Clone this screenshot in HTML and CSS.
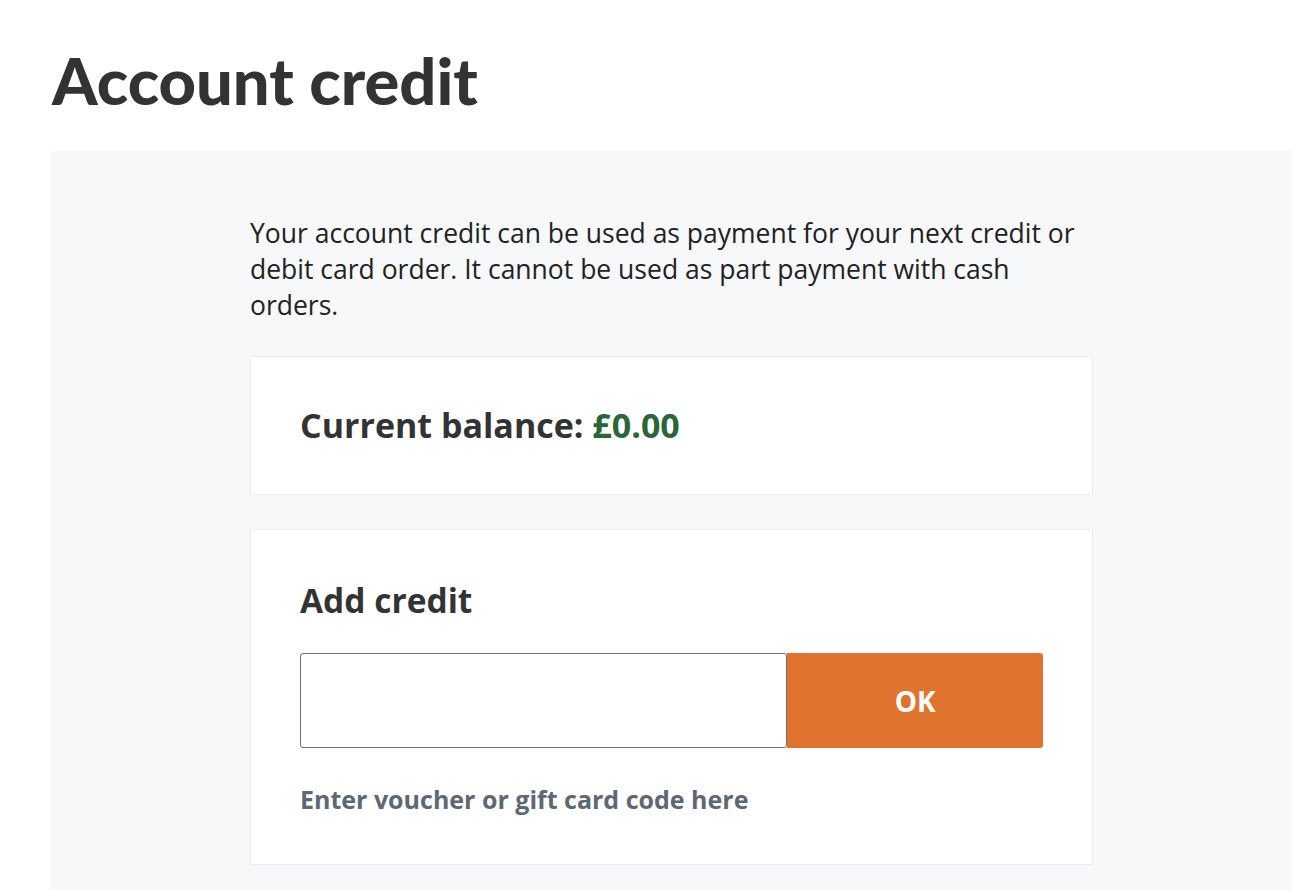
FILE: index.html
```html
<!DOCTYPE html>
<html lang="en">
<head>
<meta charset="utf-8">
<title>Account credit</title>
<link rel="stylesheet" href="styles.css">
</head>
<body>
<main class="page">
  <h1 class="title">Account credit</h1>
  <section class="panel">
    <div class="column">
      <p class="intro">Your account credit can be used as payment for your next credit or debit card order. It cannot be used as part payment with cash orders.</p>
      <div class="card balance-card">
        <h2 class="balance">Current balance: <span class="amount">£0.00</span></h2>
      </div>
      <div class="card add-card">
        <h2 class="card-title">Add credit</h2>
        <form class="code-form">
          <input class="code-input" type="text" aria-label="Voucher code">
          <button class="ok-btn" type="button">OK</button>
        </form>
        <p class="hint">Enter voucher or gift card code here</p>
      </div>
    </div>
  </section>
</main>
</body>
</html>
```

FILE: styles.css
```css
html, body {
  margin: 0;
  padding: 0;
  background: #ffffff;
}
body {
  font-family: "Open Sans", "Noto Sans", sans-serif;
  color: #333333;
}
.page {
  padding: 0 10px 0 50px;
}
.title {
  margin: 0;
  padding: 40px 0 0 2px;
  height: 151px;
  box-sizing: border-box;
  font-family: Lato, "Open Sans", sans-serif;
  font-size: 65px;
  font-weight: 900;
  line-height: 80px;
  color: #333333;
}
.panel {
  background: #f7f8fa;
  padding: 64px 0 26px 200px;
}
.column {
  width: 843px;
}
.intro {
  margin: 0 0 33px;
  font-size: 26.5px;
  line-height: 36px;
  color: #222;
}
.card {
  background: #ffffff;
  border: 1px solid #ebedf0;
  box-sizing: border-box;
  padding: 0 49px;
}
.balance-card {
  height: 139px;
  display: flex;
  align-items: center;
  margin-bottom: 34px;
}
.balance {
  margin: 0 0 2px;
  font-size: 34px;
  font-weight: 700;
  line-height: 42px;
}
.amount {
  color: #2a6637;
}
.add-card {
  height: 336px;
  padding-top: 49px;
}
.card-title {
  margin: 0 0 32px;
  font-size: 33.5px;
  font-weight: 700;
  line-height: 42px;
}
.code-form {
  display: flex;
  margin: 0;
}
.code-input {
  width: 488px;
  height: 95px;
  box-sizing: border-box;
  border: 1px solid #6f6f6f;
  border-radius: 3px;
  margin: 0;
  padding: 0 12px;
  font: inherit;
  font-size: 24px;
}
.ok-btn {
  width: 256px;
  height: 95px;
  border: none;
  border-radius: 0 3px 3px 0;
  background: #e0742e;
  color: #ffffff;
  font-family: inherit;
  font-size: 28px;
  font-weight: 700;
  margin: 0;
}
.hint {
  margin: 34px 0 0;
  font-size: 25px;
  line-height: 34px;
  font-weight: 700;
  color: #5d6873;
}
```
